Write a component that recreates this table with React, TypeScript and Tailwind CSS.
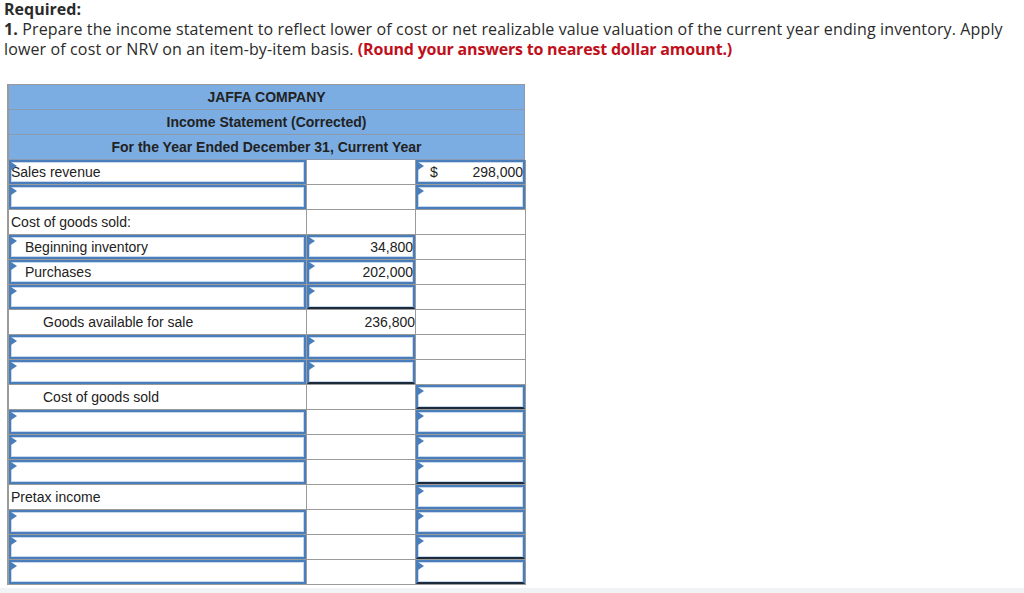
import React from "react";

type Cell = {
  input?: boolean;
  text?: string;
  indent?: number;
  align?: "left" | "right";
  dollar?: boolean;
  dark?: boolean;
};

type Row = [Cell, Cell, Cell];

const rows: Row[] = [
  [{ input: true, text: "Sales revenue" }, {}, { input: true, dollar: true, text: "298,000" }],
  [{ input: true }, {}, { input: true }],
  [{ text: "Cost of goods sold:" }, {}, {}],
  [{ input: true, text: "Beginning inventory", indent: 1 }, { input: true, text: "34,800", align: "right" }, {}],
  [{ input: true, text: "Purchases", indent: 1 }, { input: true, text: "202,000", align: "right" }, {}],
  [{ input: true }, { input: true, dark: true }, {}],
  [{ text: "Goods available for sale", indent: 2 }, { text: "236,800", align: "right" }, {}],
  [{ input: true }, { input: true }, {}],
  [{ input: true }, { input: true, dark: true }, {}],
  [{ text: "Cost of goods sold", indent: 2 }, {}, { input: true, dark: true }],
  [{ input: true }, {}, { input: true }],
  [{ input: true }, {}, { input: true }],
  [{ input: true }, {}, { input: true, dark: true }],
  [{ text: "Pretax income" }, {}, { input: true }],
  [{ input: true }, {}, { input: true }],
  [{ input: true }, {}, { input: true, dark: true }],
  [{ input: true }, {}, { input: true, dark: true }],
];

const widths = ["w-[298px]", "w-[109px]", "w-[110px]"];

function Marker() {
  return (
    <svg className="absolute left-0 top-0" width="6" height="8" viewBox="0 0 6 8">
      <polygon points="0,0 6,4 0,8" fill="#4a7ebb" />
    </svg>
  );
}

function CellView({ c, i }: { c: Cell; i: number }) {
  let pad: string;
  if (c.input) {
    pad = c.indent === 2 ? "pl-[31px]" : c.indent === 1 ? "pl-[14px]" : "pl-0";
  } else {
    pad = c.indent === 2 ? "pl-[34px]" : c.indent === 1 ? "pl-[17px]" : "pl-[2px]";
  }
  const content = c.dollar ? (
    <div className="flex h-full items-center justify-between pl-[12px] pr-0">
      <span>$</span>
      <span>{c.text}</span>
    </div>
  ) : (
    <div
      className={
        "flex h-full items-center whitespace-nowrap " +
        (c.align === "right" ? "justify-end pr-0" : pad)
      }
    >
      {c.text}
    </div>
  );
  return (
    <div className={widths[i] + " h-[25px] shrink-0 border-r border-b border-[#9a9a9a] bg-white"}>
      {c.input ? (
        <div
          className={
            "relative h-full border-2 border-[#4a7ebb] shadow-[inset_0_0_0_1px_#c5d8ef] " +
            (c.dark ? "border-b-[#1d2a3a]" : "")
          }
        >
          <Marker />
          {content}
        </div>
      ) : (
        content
      )}
    </div>
  );
}

export default function App() {
  return (
    <div className="relative h-[593px] w-[1024px] overflow-hidden bg-white">
      <div
        className="-mt-[1px] px-[4px] text-[16px] leading-[20px] text-[#2b2b2b]"
        style={{ fontFamily: '"Open Sans", "Lato", sans-serif' }}
      >
        <div className="font-bold">Required:</div>
        <div className="whitespace-nowrap tracking-[0.13px]">
          <span className="font-bold">1.</span> Prepare the income statement to reflect lower of cost or net realizable
          value valuation of the current year ending inventory. Apply
          <br />
          lower of cost or NRV on an item-by-item basis.{" "}
          <span className="font-bold tracking-[-0.2px] text-[#c0101b]">
            (Round your answers to nearest dollar amount.)
          </span>
        </div>
      </div>

      <div
        className="ml-[7px] mt-[25px] w-[518px] border-l-2 border-t border-[#9a9a9a] text-[14px] text-[#222]"
        style={{ fontFamily: '"Liberation Sans", Arial, sans-serif' }}
      >
        {["JAFFA COMPANY", "Income Statement (Corrected)", "For the Year Ended December 31, Current Year"].map((t) => (
          <div
            key={t}
            className="flex h-[25px] items-center justify-center border-r border-b border-[#8a9ab0] bg-[#7badE3] font-bold"
          >
            {t}
          </div>
        ))}
        {rows.map((r, ri) => (
          <div key={ri} className="flex">
            {r.map((c, ci) => (
              <CellView key={ci} c={c} i={ci} />
            ))}
          </div>
        ))}
      </div>
      <div className="absolute bottom-0 left-0 h-[5px] w-full bg-[#f2f3f5]" />
    </div>
  );
}
